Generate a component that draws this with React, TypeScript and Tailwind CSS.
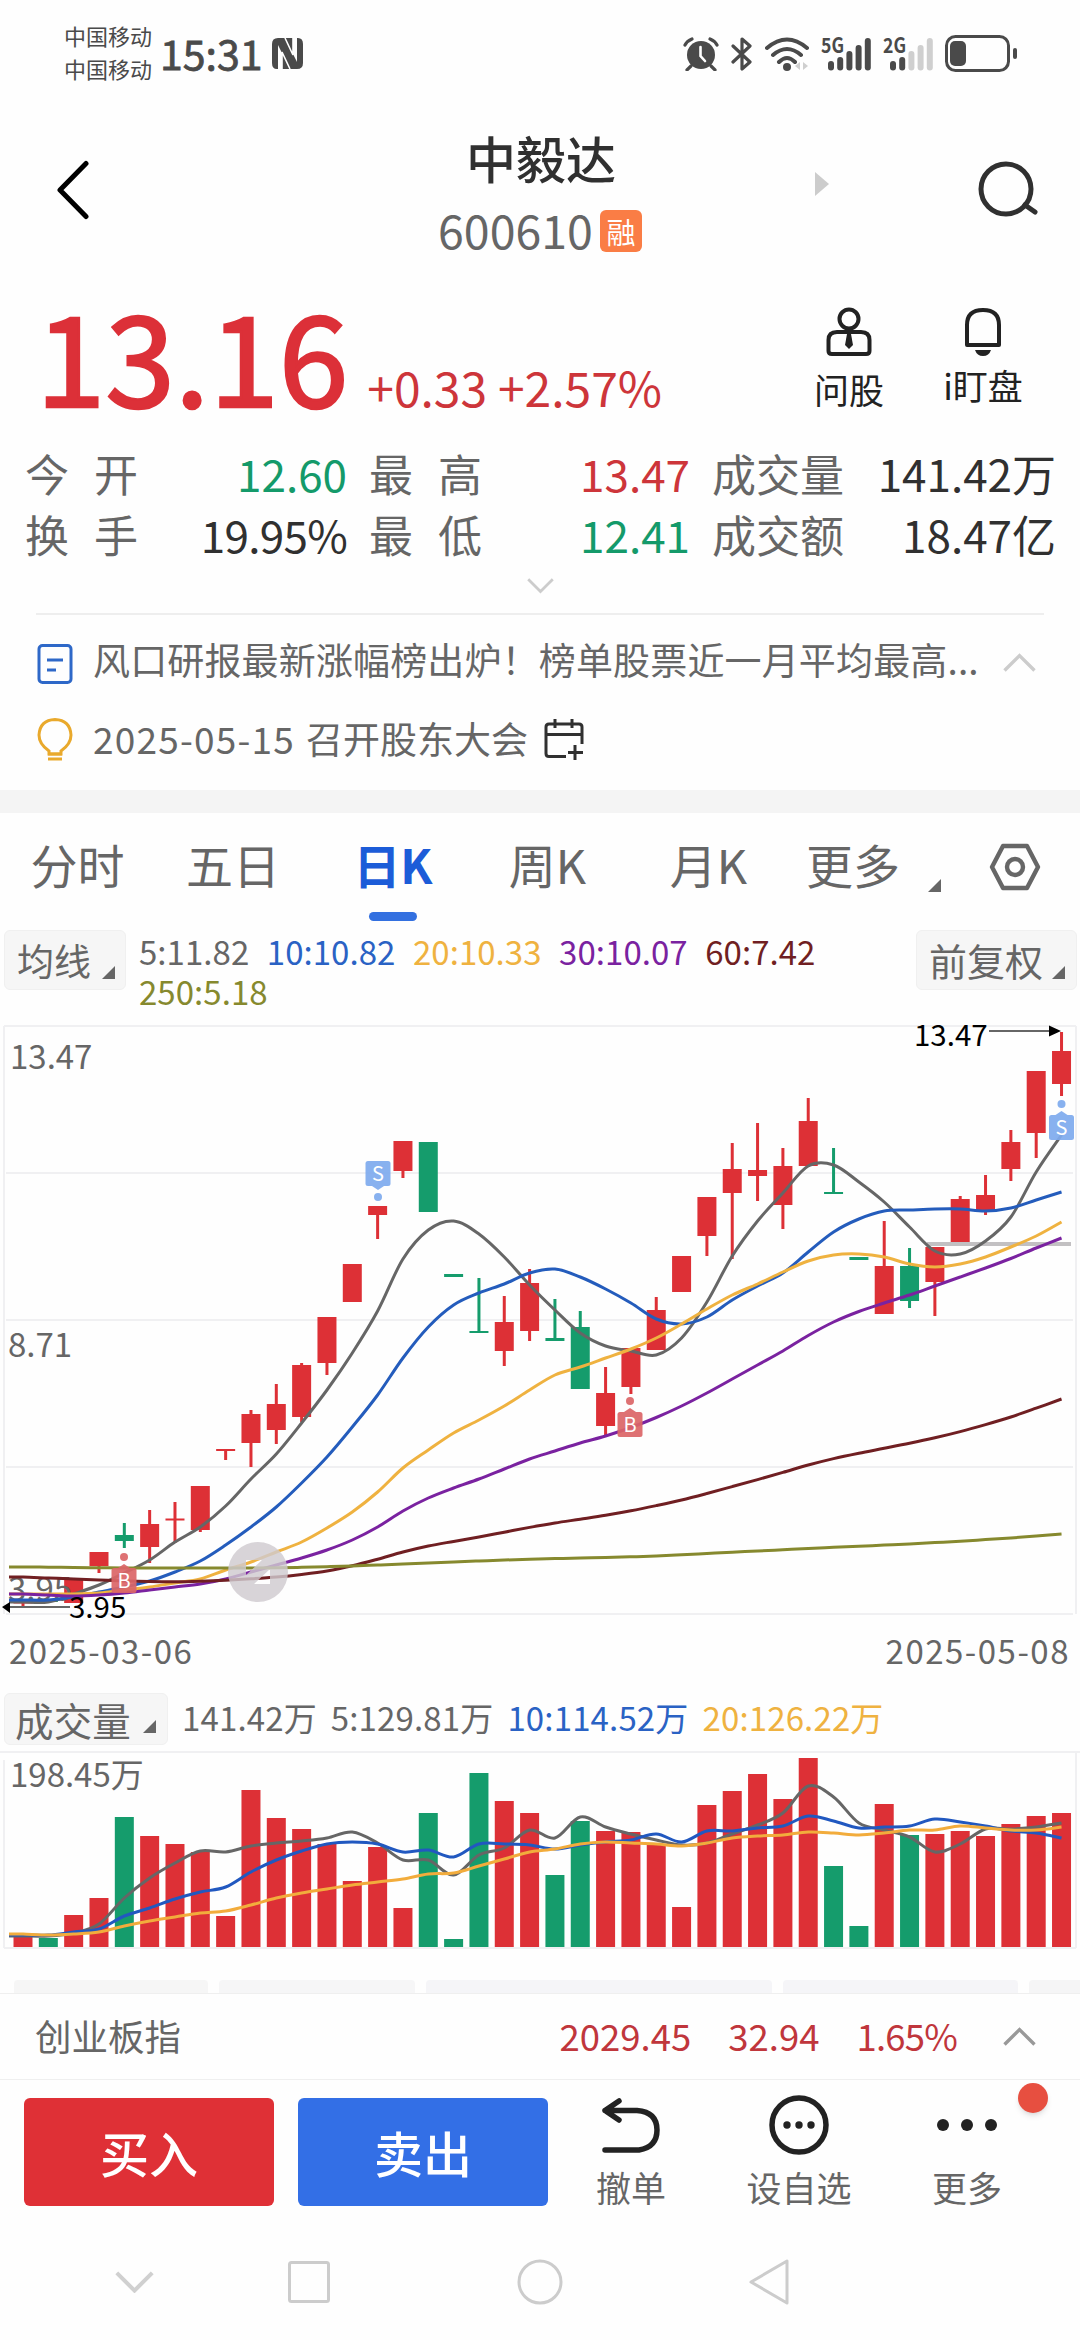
// Stock detail screen: quote header, daily K chart, volume chart and trade bar.

import type { ReactNode } from "react";

const RED = "#dd3036";
const GREEN = "#159c6c";

const STEP = 25.33;
const FIRST_X = 23;
const BAR_WIDTH = 19;

const xAt = (i: number) => FIRST_X + STEP * i;

// [body top, body bottom, wick top, wick bottom, falling]
type Candle = [number, number, number, number, boolean?];

const candles: Candle[] = [
  [1602, 1603.5, 1602, 1607],
  [1600, 1602, 1600, 1602, true],
  [1579, 1603, 1579, 1603],
  [1552, 1566, 1552, 1573],
  [1535, 1541, 1523, 1548, true],
  [1524, 1547, 1510, 1563],
  [1518.5, 1520.5, 1502, 1543],
  [1486, 1530, 1486, 1532],
  [1449, 1451, 1449, 1460],
  [1414, 1443, 1410, 1467],
  [1404, 1430, 1384, 1444],
  [1365, 1417, 1363, 1422],
  [1317, 1363, 1317, 1375],
  [1264, 1302, 1264, 1302],
  [1206, 1215, 1206, 1239],
  [1141, 1171, 1141, 1178],
  [1142, 1212, 1142, 1212, true],
  [1274, 1277, 1274, 1277, true],
  [1331, 1333, 1278, 1333, true],
  [1322, 1351, 1296, 1366],
  [1283, 1331, 1269, 1341],
  [1338, 1341, 1299, 1341, true],
  [1327, 1389, 1311, 1389, true],
  [1393, 1426, 1367, 1435],
  [1348, 1387, 1348, 1394],
  [1310, 1350, 1297, 1350],
  [1256, 1292, 1256, 1292],
  [1197, 1236, 1197, 1256],
  [1169, 1193, 1143, 1259],
  [1170, 1176, 1123, 1201],
  [1166, 1205, 1148, 1229],
  [1121, 1166, 1098, 1166],
  [1192, 1194, 1148, 1194, true],
  [1257, 1260, 1257, 1260, true],
  [1266, 1314, 1221, 1314],
  [1266, 1301, 1248, 1308, true],
  [1247, 1282, 1247, 1316],
  [1199, 1242, 1196, 1242],
  [1195, 1212, 1175, 1215],
  [1142, 1169, 1130, 1181],
  [1071, 1133, 1071, 1158],
  [1051, 1084, 1032, 1096],
];

const priceAverages = [
  {
    color: "#666666",
    ys: [1602, 1602, 1594, 1585, 1573, 1560, 1542, 1527, 1506, 1479, 1454, 1423, 1390, 1353, 1311, 1259, 1230, 1221, 1234, 1257, 1285, 1310, 1333, 1346, 1351, 1355, 1338, 1302, 1256, 1221, 1193, 1166, 1165, 1182, 1202, 1227, 1251, 1254, 1241, 1217, 1172, 1135],
  },
  {
    color: "#245cbc",
    ys: [1600, 1600, 1597, 1592, 1587, 1581, 1572, 1561, 1545, 1527, 1507, 1483, 1457, 1427, 1395, 1358, 1327, 1305, 1293, 1284, 1273, 1269, 1277, 1289, 1303, 1319, 1324, 1317, 1300, 1286, 1273, 1252, 1232, 1219, 1211, 1210, 1209, 1209, 1211, 1208, 1200, 1192],
  },
  {
    color: "#efb240",
    ys: [1594, 1594, 1594, 1593, 1590, 1587, 1583, 1579, 1570, 1562, 1552, 1542, 1528, 1512, 1492, 1468, 1450, 1433, 1420, 1406, 1390, 1375, 1367, 1358, 1349, 1338, 1324, 1309, 1295, 1284, 1272, 1261, 1255, 1254, 1257, 1264, 1267, 1264, 1257, 1247, 1236, 1222],
  },
  {
    color: "#7a22a0",
    ys: [1594, 1595, 1596, 1595, 1593, 1590, 1587, 1584, 1579, 1572, 1565, 1558, 1550, 1540, 1527, 1511, 1498, 1488, 1479, 1469, 1459, 1451, 1443, 1436, 1427.500, 1417.500, 1406, 1393, 1379, 1365, 1351, 1335.500, 1322, 1311.500, 1303, 1295, 1286, 1277, 1268, 1258.500, 1248, 1238],
  },
  {
    color: "#701f22",
    ys: [1577, 1578, 1579, 1580, 1581, 1581.600, 1581.800, 1581.200, 1580.200, 1578.800, 1577, 1574.400, 1571, 1565.800, 1559.200, 1552, 1546, 1541.400, 1537, 1532.200, 1527.400, 1523, 1519.200, 1515.300, 1510.800, 1505.600, 1500, 1493.500, 1486.600, 1479.600, 1472.400, 1465, 1458.600, 1453.200, 1448.300, 1443.300, 1437.800, 1431.600, 1424.600, 1417, 1408.200, 1399],
  },
  {
    color: "#86892e",
    ys: [1567, 1567.200, 1567.500, 1567.700, 1567.900, 1568, 1568, 1568, 1568, 1568, 1567.800, 1567.300, 1566.700, 1566, 1565, 1564, 1563, 1562, 1561, 1560, 1559.200, 1558.600, 1558, 1557.500, 1556.800, 1556, 1554.800, 1553.500, 1552.200, 1551, 1549.700, 1548.400, 1547.300, 1546.200, 1545.100, 1544, 1542.600, 1541.200, 1539.600, 1538, 1536.100, 1534],
  },
];

const volumeTops = [1937, 1938, 1915, 1898, 1817, 1836, 1844, 1852, 1916, 1790, 1818, 1829, 1844, 1881, 1847, 1908, 1813, 1939, 1773, 1801, 1813, 1875, 1821, 1831, 1832, 1845, 1907, 1805, 1791, 1774, 1799, 1758, 1866, 1926, 1804, 1835, 1834, 1831, 1836, 1824, 1816, 1813];

const volumeAverages = [
  {
    color: "#666666",
    ys: [1936, 1936, 1933, 1924, 1898, 1878, 1863, 1851, 1852, 1846, 1843, 1841, 1838, 1832, 1843, 1860, 1860, 1875, 1855, 1848, 1830, 1838, 1817, 1827, 1834, 1840, 1845, 1843, 1834, 1825, 1813, 1786, 1797, 1823, 1830, 1837, 1852, 1844, 1829, 1829, 1827, 1823],
  },
  {
    color: "#2158c0",
    ys: [1935, 1935, 1932, 1929, 1916, 1908, 1899, 1892, 1887, 1872, 1860, 1851, 1844, 1842, 1844, 1852, 1850, 1857, 1844, 1844, 1845, 1849, 1845, 1842, 1840, 1834, 1842, 1831, 1831, 1828, 1826, 1816, 1821, 1828, 1827, 1826, 1819, 1822, 1826, 1831, 1833, 1838],
  },
  {
    color: "#f2ac3c",
    ys: [1934, 1935, 1934, 1932, 1926, 1921, 1917, 1913, 1911, 1905, 1898, 1893, 1889, 1885, 1882, 1879, 1874, 1873, 1866, 1859, 1852, 1849, 1844, 1842, 1843, 1844, 1846, 1843, 1838, 1836, 1835, 1832, 1833, 1835, 1833, 1830, 1830, 1826, 1828, 1830, 1830, 1827],
  },
];

// Catmull-Rom through one point per trading day
function smoothPath(ys: number[]) {
  const pts = [[9, ys[0]], ...ys.map((y, i) => [xAt(i), y])];
  let d = `M${pts[0][0]} ${pts[0][1]}`;
  for (let i = 0; i < pts.length - 1; i++) {
    const a = pts[Math.max(i - 1, 0)];
    const b = pts[i];
    const c = pts[i + 1];
    const e = pts[Math.min(i + 2, pts.length - 1)];
    d += ` C${b[0] + (c[0] - a[0]) / 6} ${b[1] + (c[1] - a[1]) / 6} ${c[0] - (e[0] - b[0]) / 6} ${c[1] - (e[1] - b[1]) / 6} ${c[0]} ${c[1]}`;
  }
  return d;
}

function Corner({ className = "" }: { className?: string }) {
  return (
    <svg className={className} width="13" height="13" viewBox="0 0 13 13">
      <path d="M13 0V13H0Z" fill="#666" />
    </svg>
  );
}

function Chevron({ up, color, w = 33 }: { up?: boolean; color: string; w?: number }) {
  const h = w * 0.58;
  return (
    <svg width={w} height={h} viewBox="0 0 33 19" fill="none" stroke={color} strokeWidth="3.4">
      <path d={up ? "M1.5 17.5L16.5 2.5L31.5 17.5" : "M1.5 1.5L16.5 16.5L31.5 1.5"} />
    </svg>
  );
}

function Signal({ label, strong }: { label: string; strong: number }) {
  return (
    <svg className="overflow-visible" width="50" height="34" viewBox="0 0 50 34">
      <text x="0" y="16" fontSize="21" fontWeight="700" fill="#4a4a4a" textLength="23" lengthAdjust="spacingAndGlyphs">
        {label}
      </text>
      {[24, 20, 14, 8, 1].map((top, i) => (
        <rect key={i} x={7 + i * 9.2} y={top} width="6" height={33.5 - top} rx="3" fill={i < strong ? "#4a4a4a" : "#cfcfcf"} />
      ))}
    </svg>
  );
}

function StatusBar() {
  return (
    <div className="flex h-[104px] items-center pl-[64px] pr-[62px] text-[#4a4a4a]">
      <div className="text-[22px] leading-[33px]">
        <div>中国移动</div>
        <div>中国移动</div>
      </div>
      <span className="ml-[8px] w-[103px] text-[41px] leading-none [-webkit-text-stroke:0.8px]">15:31</span>
      <svg className="ml-[9px] mt-[2px]" width="31" height="33" viewBox="0 0 31 33">
        <path d="M6 1H13L25 25V1H26Q31 1 31 7V26Q31 32 25 32H18L6 8V32H5Q0 32 0 26V7Q0 1 6 1Z" fill="#4a4a4a" />
        <path d="M10 32V15L18 32M13 1L21 18V1" fill="#4a4a4a" stroke="#fefefe" strokeWidth="1.6" />
      </svg>

      <div className="ml-auto mt-[3px] flex items-center gap-3">
        <svg width="36" height="34" viewBox="0 0 36 34" fill="none" stroke="#4a4a4a" strokeLinecap="round">
          <circle cx="18" cy="18" r="14" fill="#4a4a4a" stroke="none" />
          <path d="M2 8Q4 4 9 2M34 8Q32 4 27 2M8 29L4 33M28 29L32 33" strokeWidth="3.2" />
          <path d="M17.5 10V19L22 24" stroke="#fefefe" strokeWidth="2.6" />
        </svg>
        <svg width="22" height="34" viewBox="0 0 22 34" fill="none" stroke="#4a4a4a" strokeWidth="3.2" strokeLinejoin="round" strokeLinecap="round">
          <path d="M2 9L19 25L11 32V2L19 9L2 25" />
        </svg>
        <svg width="44" height="34" viewBox="0 0 44 34" fill="none" stroke="#4a4a4a" strokeWidth="4" strokeLinecap="round">
          <path d="M2 11Q22 -6 42 11M8 18Q22 6 36 18M14 25Q22 17 30 25" />
          <circle cx="22" cy="30" r="4" fill="#4a4a4a" stroke="none" />
          <path d="M35 25L30 29L35 33ZM38 25L43 29L38 33Z" fill="#cfcfcf" stroke="none" />
        </svg>
        <Signal label="5G" strong={5} />
        <Signal label="2G" strong={2} />
        <svg width="73" height="37" viewBox="0 0 73 37">
          <rect x="1.5" y="1.5" width="62" height="34" rx="9" fill="none" stroke="#4a4a4a" strokeWidth="3" />
          <rect x="5" y="6" width="16" height="25" rx="5" fill="#4a4a4a" />
          <rect x="68" y="13" width="4" height="11" rx="2" fill="#4a4a4a" />
        </svg>
      </div>
    </div>
  );
}

function Header() {
  return (
    <div className="flex h-[186px]">
      <div className="w-[265px] pl-[56px] pt-[56px]">
        <svg width="34" height="60" viewBox="0 0 34 60" fill="none" stroke="#000" strokeWidth="5" strokeLinecap="round" strokeLinejoin="round">
          <path d="M30 3.5L4 30L30 56.5" />
        </svg>
      </div>
      <div className="flex flex-1 flex-col items-center pt-[17px]">
        <div className="pl-[2px] text-[50px] font-medium leading-[72px] text-[#303030]">中毅达</div>
        <div className="flex h-[72px] items-center">
          <span className="text-[46.5px] leading-none text-[#666]">600610</span>
          <span className="ml-[7px] mt-[4px] flex h-[42px] w-[42px] items-center justify-center rounded-[6px] bg-[#fa7d45] text-[29px] leading-none text-white">
            融
          </span>
        </div>
      </div>
      <div className="flex w-[265px] items-start">
        <svg className="mt-[68px]" width="14" height="24" viewBox="0 0 14 24">
          <path d="M0 0L14 12L0 24Z" fill="#ccc" />
        </svg>
        <svg className="ml-[149px] mt-[57px]" width="62" height="58" viewBox="0 0 62 58" fill="none" stroke="#303030" strokeWidth="5" strokeLinecap="round">
          <circle cx="28" cy="28" r="25" />
          <path d="M47 44L57 51" />
        </svg>
      </div>
    </div>
  );
}

function Quote() {
  return (
    <div className="flex h-[152px] pl-[36px]">
      <div className="flex w-[779px] items-baseline text-[#dc3038]">
        <span className="text-[125px] leading-[125px] [-webkit-text-stroke:2.5px]">13.16</span>
        <span className="ml-[19px] whitespace-nowrap text-[48px] text-[#cd353a]">+0.33 +2.57%</span>
      </div>
      <div className="flex flex-1 items-start text-[35px] leading-[40px] text-[#222]">
        <div className="flex w-[68px] flex-col items-center pt-[17px]">
          <svg width="46" height="50" viewBox="0 0 46 50" fill="none" stroke="#222" strokeWidth="4">
            <circle cx="23" cy="12" r="9.5" />
            <path d="M11 25H35Q43.500 25 43.500 33V44Q43.500 47 40 47H6Q2.500 47 2.500 44V33Q2.500 25 11 25Z" />
            <path d="M21 27H25L27 38L23 42L19 38Z" fill="#222" stroke="none" />
          </svg>
          <span className="mt-[12px] whitespace-nowrap">问股</span>
        </div>
        <div className="ml-[60px] flex w-[80px] flex-col items-center pt-[17px]">
          <svg width="38" height="50" viewBox="0 0 38 50" fill="none" stroke="#222" strokeWidth="4">
            <path d="M3 38V18Q3 3 19 3Q35 3 35 18V38Z" strokeLinejoin="round" />
            <path d="M11 43H27Q25 49 19 49Q13 49 11 43Z" fill="#222" stroke="none" />
          </svg>
          <span className="mt-[8px] whitespace-nowrap">i盯盘</span>
        </div>
      </div>
    </div>
  );
}

interface StatProps {
  label: string;
  value: string;
  className: string;
}

function Stat({ label, value, className }: StatProps) {
  const chars = label.length === 2 ? label.split("") : [label];
  return (
    <div className="flex h-[61px] items-center justify-between whitespace-nowrap">
      <div className="flex gap-[25px] text-[#666]">
        {chars.map((c) => (
          <span key={c}>{c}</span>
        ))}
      </div>
      <span className={className}>{value}</span>
    </div>
  );
}

function Stats() {
  return (
    <div className="grid grid-cols-[322px_321px_344px] gap-x-[22px] pl-[25px] text-[44px] leading-none">
      <Stat label="今开" value="12.60" className="text-[#149a6a]" />
      <Stat label="最高" value="13.47" className="text-[#cd353a]" />
      <Stat label="成交量" value="141.42万" className="text-[#303030]" />
      <Stat label="换手" value="19.95%" className="tracking-[-0.7px] text-[#303030]" />
      <Stat label="最低" value="12.41" className="text-[#149a6a]" />
      <Stat label="成交额" value="18.47亿" className="text-[#303030]" />
    </div>
  );
}

function News() {
  return (
    <div className="h-[175px] pl-[37px] pr-[44px] pt-[5px] text-[37px] leading-none text-[#666]">
      <div className="flex h-[79px] items-center">
        <svg className="mt-[8px]" width="36" height="40" viewBox="0 0 36 40" fill="none" stroke="#2e68c8" strokeWidth="3">
          <rect x="2" y="1.5" width="32" height="37" rx="3.500" />
          <path d="M10 16H26M10 26H19" />
        </svg>
        <span className="ml-[20px] whitespace-nowrap tracking-[0.15px]">风口研报最新涨幅榜出炉！榜单股票近一月平均最高...</span>
        <div className="ml-auto mt-[6px]">
          <Chevron up color="#ccc" />
        </div>
      </div>
      <div className="flex h-[79px] items-center">
        <svg className="mt-[2px]" width="36" height="43" viewBox="0 0 36 43" fill="none" stroke="#e9a92c" strokeWidth="3">
          <path d="M12 36V33Q2 26 2 17Q3 2 18 1.500Q33 2 34 17Q34 26 24 33V36Z" />
          <path d="M11 36H25M11 41H25" />
        </svg>
        <span className="ml-[20px] tracking-[1.2px]">2025-05-15</span>
        <span className="ml-[11px]">召开股东大会</span>
        <svg className="ml-[16px] mt-[2px]" width="40" height="41" viewBox="0 0 40 41" fill="none" stroke="#303030" strokeWidth="3">
          <path d="M22 37.500H5Q2 37.500 2 34.500V8Q2 5 5 5H35Q38 5 38 8V25M2 15.500H38M11 0V9M28 0V9M31 26V41M24 33.500H39" />
        </svg>
      </div>
    </div>
  );
}

const tabs = [
  { label: "分时", width: "w-[155px]" },
  { label: "五日", width: "w-[156px]" },
  { label: "日K", width: "w-[164px]", active: true },
  { label: "周K", width: "w-[145px]" },
  { label: "月K", width: "w-[177px]" },
  { label: "更多", width: "w-[112px]" },
];

function Tabs() {
  return (
    <div className="flex h-[117px] pt-[16px]">
      {tabs.map((tab) => (
        <div key={tab.label} className={`flex flex-col items-center ${tab.width}`}>
          <span className={`whitespace-nowrap text-[47px] leading-[70px] ${tab.active ? "font-bold text-[#1c5cd8]" : "text-[#666]"}`}>
            {tab.label}
          </span>
          {tab.active && <span className="mt-[13px] h-[9px] w-[48px] rounded-full bg-[#3370e0]" />}
        </div>
      ))}
      <Corner className="ml-[19px] mt-[50px]" />
      <svg className="ml-[48px] mt-[14px]" width="52" height="48" viewBox="0 0 52 48" fill="none" stroke="#666" strokeWidth="4.400" strokeLinejoin="round">
        <path d="M14 3H38L49 24L38 45H14L3 24Z" />
        <circle cx="26" cy="24" r="8" />
      </svg>
    </div>
  );
}

function PickerButton({ children, className }: { children: ReactNode; className: string }) {
  return (
    <div className={`flex items-center rounded-[6px] border border-[#f0f0f0] bg-[#f6f6f6] leading-none text-[#666] ${className}`}>
      {children}
    </div>
  );
}

function AverageLegend() {
  return (
    <div className="flex h-[80px] items-start pl-[4px] pr-[3px]">
      <PickerButton className="h-[60px] w-[122px] pl-[12px] text-[37px]">
        均线
        <Corner className="ml-[11px] mt-[24px]" />
      </PickerButton>
      <div className="ml-[13px] mt-px flex w-[760px] flex-wrap gap-x-[17.5px] text-[33px] leading-[40px] tracking-[0.05px]">
        <span className="text-[#666]">5:11.82</span>
        <span className="text-[#2a62c4]">10:10.82</span>
        <span className="text-[#efb240]">20:10.33</span>
        <span className="text-[#7a22a0]">30:10.07</span>
        <span className="text-[#701f22]">60:7.42</span>
        <span className="text-[#86892e]">250:5.18</span>
      </div>
      <PickerButton className="ml-auto h-[60px] w-[161px] pl-[12px] text-[38px]">
        前复权
        <Corner className="ml-[9px] mt-[24px]" />
      </PickerButton>
    </div>
  );
}

interface MarkerProps {
  x: number;
  y: number;
  kind: "S" | "B";
  below?: boolean;
}

// Buy / sell flag with the dot that ties it to its candle
function Marker({ x, y, kind, below }: MarkerProps) {
  const color = kind === "S" ? "#7fabee" : "#dc6668";
  return (
    <g>
      <g fill={color} opacity="0.92">
        <rect x={x - 12.5} y={y} width="25" height="25" rx="2.5" />
        {below ? (
          <path d={`M${x - 6} ${y}L${x} ${y - 4}L${x + 6} ${y}Z`} />
        ) : (
          <path d={`M${x - 6} ${y + 25}L${x} ${y + 29}L${x + 6} ${y + 25}Z`} />
        )}
        <circle cx={x} cy={below ? y - 11 : y + 36} r="4" />
      </g>
      <text x={x} y={y + 19.5} fontSize="20" fill="#fff" textAnchor="middle">
        {kind}
      </text>
    </g>
  );
}

function Averages({ series }: { series: { color: string; ys: number[] }[] }) {
  return (
    <g fill="none" strokeWidth="3">
      {series.map((s) => (
        <path key={s.color} d={smoothPath(s.ys)} stroke={s.color} />
      ))}
    </g>
  );
}

function PriceChart() {
  return (
    <svg className="block" width="1080" height="620" viewBox="0 1010 1080 620">
      <g fill="none" stroke="#f0f0f2" strokeWidth="2">
        <path d="M4 1026H1076M6 1173H1073M6 1320H1073M6 1467H1073M6 1614H1073" />
        <path d="M4 1026V1614M1076 1026V1614" />
      </g>
      <path d="M927 1244H1071" stroke="#c2c0c2" strokeWidth="4" />
      {candles.map(([top, bottom, high, low, falling], i) => (
        <g key={i} fill={falling ? GREEN : RED}>
          <rect x={xAt(i) - 1.5} y={high} width="3" height={low - high} />
          <rect x={xAt(i) - BAR_WIDTH / 2} y={top} width={BAR_WIDTH} height={bottom - top} />
        </g>
      ))}
      <g fontSize="33" fill="#666">
        <text x="10" y="1069">13.47</text>
        <text x="8" y="1357">8.71</text>
        <text x="8" y="1601">3.95</text>
      </g>
      <Averages series={priceAverages} />
      <Marker kind="S" x={378} y={1161} />
      <Marker kind="S" x={1061.5} y={1115} below />
      <Marker kind="B" x={124} y={1568} below />
      <Marker kind="B" x={630} y={1412} below />

      <g stroke="#666" strokeWidth="2">
        <path d="M989 1031H1050M9 1607H70" />
      </g>
      <path d="M1049 1025.500L1061 1031L1049 1036.500ZM10 1602V1613L2 1607Z" />
      <g fontSize="29.5" fill="#000">
        <text x="914" y="1046">13.47</text>
        <text x="69" y="1618">3.95</text>
      </g>

      {/* floating assistive button, with two cut-out corners */}
      <path
        d="M228 1572a30 30 0 1 0 60 0a30 30 0 1 0 -60 0ZM246 1560H262L246 1575ZM270 1569V1584H254Z"
        fill="#cfcbd0"
        fillRule="evenodd"
        opacity="0.82"
      />
    </svg>
  );
}

function VolumeChart() {
  return (
    <svg className="block" width="1080" height="220" viewBox="0 1745 1080 220">
      <path d="M0 1752H1080M4 1760V1948M1076 1752V1948M4 1948H1076" fill="none" stroke="#f0f0f2" strokeWidth="2" />
      <text x="10" y="1787" fontSize="33" fill="#666">
        198.45万
      </text>
      {volumeTops.map((top, i) => (
        <rect key={i} x={xAt(i) - BAR_WIDTH / 2} y={top} width={BAR_WIDTH} height={1947 - top} fill={candles[i][4] ? GREEN : RED} />
      ))}
      <Averages series={volumeAverages} />
    </svg>
  );
}

function IndexBar() {
  return (
    <div className="flex h-[87px] items-center border-y border-[#efefef] pl-[35px] pr-[44px] text-[36.5px] leading-none">
      <span className="text-[#666]">创业板指</span>
      <div className="ml-auto flex gap-[37px] text-[#c0363c]">
        <span>2029.45</span>
        <span>32.94</span>
        <span className="tracking-[-0.8px]">1.65%</span>
      </div>
      <div className="ml-[46px]">
        <Chevron up color="#999" />
      </div>
    </div>
  );
}

function TradeBar() {
  return (
    <div className="flex h-[150px] items-start pl-[24px] pt-[18px] text-[35px] leading-[40px] text-[#666]">
      <button className="h-[108px] w-[250px] rounded-[6px] bg-[#df3036] text-[49px] font-medium text-white">买入</button>
      <button className="ml-[24px] h-[108px] w-[250px] rounded-[6px] bg-[#336fe6] text-[49px] font-medium text-white">卖出</button>
      <div className="ml-[47px] flex w-[72px] flex-col items-center">
        <svg width="60" height="56" viewBox="0 0 60 56" fill="none" stroke="#222" strokeWidth="5.500" strokeLinecap="round" strokeLinejoin="round">
          <path d="M18 3L4 12.500L18 22M4 12.500H36Q56 14 56 32Q56 49 38 52H4" />
        </svg>
        <span className="mt-[13px]">撤单</span>
      </div>
      <div className="ml-[79px] mt-[-3px] flex w-[106px] flex-col items-center">
        <svg width="60" height="60" viewBox="0 0 60 60">
          <circle cx="30" cy="30" r="27" fill="none" stroke="#222" strokeWidth="5.500" />
          <g fill="#222">
            <circle cx="18" cy="30" r="3.700" />
            <circle cx="30" cy="30" r="3.700" />
            <circle cx="42" cy="30" r="3.700" />
          </g>
        </svg>
        <span className="mt-[12px]">设自选</span>
      </div>
      <div className="relative ml-[79px] flex w-[72px] flex-col items-center">
        <svg width="62" height="56" viewBox="0 0 62 56" fill="#222">
          <circle cx="7" cy="27" r="6" />
          <circle cx="31" cy="27" r="6" />
          <circle cx="55" cy="27" r="6" />
        </svg>
        <span className="mt-[13px]">更多</span>
        <span className="absolute left-[87px] top-[-15px] h-[30px] w-[30px] rounded-full bg-[#e74f40] shadow-md" />
      </div>
    </div>
  );
}

function SystemNav() {
  return (
    <div className="flex h-[104px] items-center pl-[115px]">
      <Chevron color="#d0d0d0" w={39} />
      <svg className="ml-[134px]" width="42" height="42" viewBox="0 0 42 42">
        <rect x="1.500" y="1.500" width="39" height="39" rx="2" fill="none" stroke="#ccc" strokeWidth="3" />
      </svg>
      <svg className="ml-[187px]" width="46" height="46" viewBox="0 0 46 46">
        <circle cx="23" cy="23" r="21" fill="none" stroke="#ccc" strokeWidth="3" />
      </svg>
      <svg className="ml-[185px]" width="42" height="48" viewBox="0 0 42 48">
        <path d="M39 3V45L3 24Z" fill="none" stroke="#ccc" strokeWidth="3" strokeLinejoin="round" />
      </svg>
    </div>
  );
}

export default function App() {
  return (
    <div className="h-[2340px] w-[1080px] overflow-hidden bg-[#fefefe] font-['Noto_Sans_CJK_SC',sans-serif]">
      <StatusBar />
      <Header />
      <Quote />
      <Stats />
      <div className="mx-[36px] flex h-[51px] justify-center border-b-2 border-[#eee] pt-[14px]">
        <Chevron color="#ccc" w={27} />
      </div>
      <News />
      <div className="h-[23px] bg-[#f4f4f4]" />
      <Tabs />
      <AverageLegend />
      <PriceChart />
      <div className="flex h-[40px] items-center justify-between pl-[9px] pr-[10px] text-[33px] leading-none tracking-[1.5px] text-[#666]">
        <span>2025-03-06</span>
        <span>2025-05-08</span>
      </div>
      <div className="mt-[23px] flex h-[52px] items-center gap-[14px] pl-[4px] text-[33px] leading-none tracking-[0.15px] text-[#666]">
        <PickerButton className="h-full w-[164px] pl-[10px] text-[38.5px]">
          成交量
          <Corner className="ml-[12px] mt-[15px]" />
        </PickerButton>
        <span className="mt-[-3px]">141.42万</span>
        <span className="mt-[-3px]">5:129.81万</span>
        <span className="mt-[-3px] text-[#2a62c4]">10:114.52万</span>
        <span className="mt-[-3px] text-[#efb240]">20:126.22万</span>
      </div>
      <VolumeChart />
      <div className="flex h-[28px] gap-[11px] pl-[14px] pt-[15px]">
        <div className="w-[194px] rounded-t bg-[#f6f6f6]" />
        <div className="w-[196px] rounded-t bg-[#f6f6f7]" />
        <div className="w-[346px] rounded-t bg-[#f5f5f8]" />
        <div className="w-[235px] rounded-t bg-[#f5f5f8]" />
        <div className="flex-1 rounded-tl bg-[#f5f5f6]" />
      </div>
      <IndexBar />
      <TradeBar />
      <SystemNav />
    </div>
  );
}
